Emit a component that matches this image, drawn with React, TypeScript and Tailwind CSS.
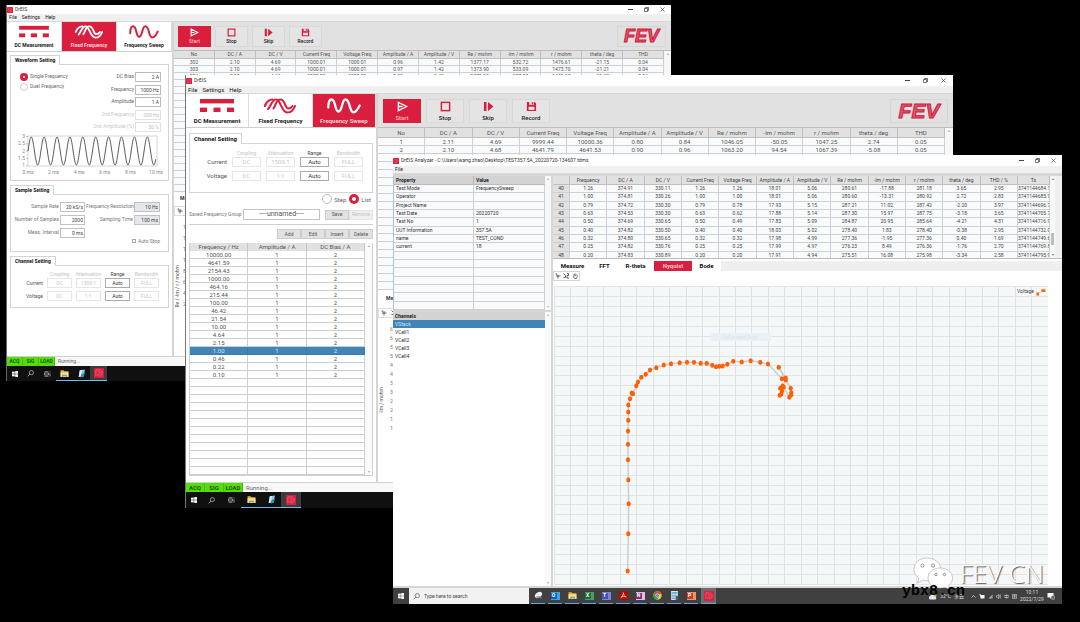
import React from "react";

type Size = "s" | "m";

const RED = "#d91f3d";

/* ---------- icons ---------- */

function AppIcon({ className }: { className: string }) {
  return (
    <svg viewBox="0 0 16 16" className={className} aria-hidden="true">
      <rect width="16" height="16" rx="1" fill={RED} />
      <path d="M3 13V3h5c4 0 5 2 5 5s-2 5-5 5M6 6h2c2 0 2 1 2 2s0 2-2 2H6v3" fill="none" stroke="#ea6a80" strokeWidth="1.2" />
    </svg>
  );
}

function DcIcon({ className }: { className: string }) {
  return (
    <svg viewBox="0 0 34 16" className={className} aria-hidden="true">
      <g fill="currentColor">
        <rect x="0" y="1" width="34" height="4.4" />
        <rect x="0" y="9.6" width="7" height="4.4" />
        <rect x="13.5" y="9.6" width="7" height="4.4" />
        <rect x="27" y="9.6" width="7" height="4.4" />
      </g>
    </svg>
  );
}

function FixedIcon({ className }: { className: string }) {
  return (
    <svg viewBox="0 0 34 16" className={className} aria-hidden="true">
      <g fill="none" stroke="currentColor" strokeWidth="2.1" strokeLinecap="round">
        <path d="M1.8 8C3.500 4 5.500 1.500 9.500 1.500" />
        <path d="M5 11C8 8 9 1.500 13 1.500C18 1.500 18 14.500 24.500 14.500C28 14.500 30.500 12 32 8" />
        <path d="M10.500 10.500C13 7 13 1.500 17.500 1.500C22.500 1.500 21.500 10.500 25.500 10.500C27.500 10.500 28.500 9.500 29.500 8" />
      </g>
    </svg>
  );
}

function SweepIcon({ className }: { className: string }) {
  return (
    <svg viewBox="0 0 34 16" className={className} aria-hidden="true">
      <path
        d="M1.300 9.500C1.300 4 2.500 1.500 4.500 1.500C9 1.500 7.500 13.500 11.500 13.500C15.500 13.500 14.500 1.500 18.500 1.500C23.500 1.500 22 14.300 26.500 14.300C29.500 14.300 31 11 32.700 7.500"
        fill="none"
        stroke="currentColor"
        strokeWidth="2.300"
        strokeLinecap="round"
      />
    </svg>
  );
}

function ToolIcon({ name, className }: { name: string; className: string }) {
  return (
    <svg viewBox="0 0 12 12" className={className} aria-hidden="true">
      {name === "Start" && <path d="M1.500 1.500L10.500 6L1.500 10.500Z M1.500 6H6" fill="none" stroke="currentColor" strokeWidth="1.500" />}
      {name === "Stop" && <rect x="1.500" y="1.500" width="9" height="9" fill="none" stroke="currentColor" strokeWidth="1.600" />}
      {name === "Skip" && <path d="M1 1H3.800V11H1Z M5.500 1L11.500 6L5.500 11Z" fill="currentColor" />}
      {name === "Record" && (
        <g>
          <path d="M1 1H9.500L11 2.500V11H1Z" fill="currentColor" />
          <rect x="3.500" y="1" width="5" height="3.200" fill="#e6e6e6" />
          <rect x="6.300" y="1.300" width="1.400" height="2.400" fill="currentColor" />
          <rect x="2.800" y="6.300" width="6.400" height="3.400" fill="#e6e6e6" />
        </g>
      )}
    </svg>
  );
}

function WindowsIcon() {
  return (
    <svg viewBox="0 0 12 12" className="size-[6px]" aria-hidden="true">
      <path d="M0 1.500L5.400 .8V5.600H0ZM6.200 .7L12 0V5.600H6.200ZM0 6.400H5.400V11.200L0 10.500ZM6.200 6.400H12V12L6.200 11.300Z" fill="#fff" />
    </svg>
  );
}

function SearchIcon({ className }: { className: string }) {
  return (
    <svg viewBox="0 0 12 12" className={className} aria-hidden="true">
      <circle cx="7.500" cy="4.500" r="3.500" fill="none" stroke="currentColor" strokeWidth="1.200" />
      <path d="M5 7L1 11" stroke="currentColor" strokeWidth="1.200" />
    </svg>
  );
}

function TaskViewIcon() {
  return (
    <svg viewBox="0 0 14 12" className="h-[6px] w-[7px]" aria-hidden="true">
      <path d="M1 1.500H9M1 10.500H9M1 4H9V8H1ZM12 1V3M12 4.500V11" fill="none" stroke="#ddd" strokeWidth="1.200" />
    </svg>
  );
}

function FolderIcon() {
  return (
    <svg viewBox="0 0 16 16" className="size-[9px]" aria-hidden="true">
      <path d="M1 2H6L8 4H15V14H1Z" fill="#e9b53a" />
      <path d="M1 6H15V14H1Z" fill="#ffdf7e" />
      <path d="M4 14V10H12V14H10V12H6V14Z" fill="#3f9bdc" />
    </svg>
  );
}

function NoteIcon() {
  return (
    <svg viewBox="0 0 16 16" className="size-[9px]" aria-hidden="true">
      <path d="M5 2L14 1L12 13L3 14Z" fill="#8fd0e6" />
      <path d="M5 2L9 1.600L7 13.500L3 14Z" fill="#d5eef6" />
      <path d="M8 9L14 6L12 14L6 15Z" fill="#3d8aa8" />
    </svg>
  );
}

function Tile({ letter, tile, page }: { letter: string; tile: string; page: string }) {
  return (
    <span className={`flex h-[8px] w-[9px] items-center justify-start ${page}`}>
      <span className={`flex h-[6px] w-[6px] items-center justify-center text-[5px] leading-none font-bold text-white ${tile}`}>{letter}</span>
    </span>
  );
}

function ChromeIcon() {
  return (
    <svg viewBox="0 0 16 16" className="size-[9px]" aria-hidden="true">
      <circle cx="8" cy="8" r="7.500" fill="#f6c026" />
      <path d="M8 8L1.500 4.200A7.500 7.500 0 0 1 14.500 4.300Z" fill="#dd4a3a" />
      <path d="M8 8L1.500 4.200A7.500 7.500 0 0 0 7.500 15.500L10 10Z" fill="#2da150" />
      <circle cx="8" cy="8" r="3.600" fill="#fff" />
      <circle cx="8" cy="8" r="2.800" fill="#4586f0" />
    </svg>
  );
}

function SnipIcon() {
  return (
    <svg viewBox="0 0 16 16" className="size-[9px]" aria-hidden="true">
      <ellipse cx="8" cy="7" rx="7" ry="4.500" fill="#f1eeee" transform="rotate(-35 8 7)" />
      <path d="M2 11L9 9L7 12Z" fill="#c9452f" />
      <path d="M8 10L14 13" stroke="#3793c4" strokeWidth="2" />
    </svg>
  );
}

function AcrobatIcon() {
  return (
    <svg viewBox="0 0 16 16" className="size-[9px]" aria-hidden="true">
      <rect width="16" height="16" rx="2" fill="#b30b00" />
      <path d="M8 3C7 8 5 11 3 12.500M8 3C8 7 10 10 13 10.500M4 11C7 9.500 10 9.500 13 10.500" fill="none" stroke="#fff" strokeWidth="1.200" />
    </svg>
  );
}

function CalcIcon() {
  return (
    <svg viewBox="0 0 16 16" className="size-[9px]" aria-hidden="true">
      <rect x="2" y="0" width="12" height="16" fill="#dfe7ec" />
      <rect x="3" y="2" width="10" height="3" fill="#4db2dc" />
      <path d="M3 7.500H13M3 10.500H9M3 13.500H9" stroke="#6f8796" strokeWidth="1.400" />
      <rect x="10" y="9" width="4" height="7" fill="#1f5fa0" />
    </svg>
  );
}

/* ---------- shared window parts ---------- */

function WindowControls({ className }: { className: string }) {
  return (
    <div className={`flex items-center ${className}`}>
      <button type="button" aria-label="Minimize" className="flex size-[5px] items-center">
        <span className="h-px w-full bg-[#444]" />
      </button>
      <button type="button" aria-label="Restore" className="size-[5px]">
        <svg viewBox="0 0 10 10" className="size-full">
          <path d="M1 3H7V9H1ZM3 3V1H9V7H7" fill="none" stroke="#333" strokeWidth="1.400" />
        </svg>
      </button>
      <button type="button" aria-label="Close" className="size-[5px]">
        <svg viewBox="0 0 10 10" className="size-full">
          <path d="M1 1L9 9M9 1L1 9" stroke="#333" strokeWidth="1.300" />
        </svg>
      </button>
    </div>
  );
}

const titleBar = { s: "h-[9px]", m: "h-[11px]" };
const menuBar = { s: "h-[8px] text-[5px]", m: "h-[8px] text-[6px]" };

function TitleBar({ size, title, controls }: { size: Size; title: string; controls: string }) {
  return (
    <header className={`flex items-center justify-between bg-white ${titleBar[size]}`}>
      <div className="flex items-center gap-[2px] text-[5px] leading-[7px] text-[#333]">
        <AppIcon className="size-[6px]" />
        <h2>{title}</h2>
      </div>
      <WindowControls className={controls} />
    </header>
  );
}

function MenuBar({ size, items }: { size: Size; items: string[] }) {
  return (
    <nav className={`flex items-center gap-[5px] border-b border-[#d9d9d9] bg-[#f0f0f0] pl-[2px] text-[#222] ${menuBar[size]}`}>
      {items.map((item) => (
        <button type="button" key={item} className="leading-none">
          {item}
        </button>
      ))}
    </nav>
  );
}

const modes = [
  { name: "DC Measurement", Icon: DcIcon },
  { name: "Fixed Frequency", Icon: FixedIcon },
  { name: "Frequency Sweep", Icon: SweepIcon },
];

function ModeTabs({ size, active }: { size: Size; active: string }) {
  return (
    <div role="tablist" className={`flex border-b border-[#cfcfcf] bg-white ${size === "s" ? "h-[30px]" : "h-[34px]"}`}>
      {modes.map(({ name, Icon }) => {
        const on = name === active;
        return (
          <button
            type="button"
            role="tab"
            aria-selected={on}
            key={name}
            className={`flex flex-1 flex-col items-center border-r border-[#dcdcdc] ${
              size === "s" ? "gap-[2px] pt-[3px] text-[5px]" : "gap-[3px] pt-[4px] text-[6px]"
            } ${on ? "bg-[#d91f3d] text-white" : "bg-white text-[#d91f3d]"}`}
          >
            <Icon className={size === "s" ? "h-[14px] w-[30px]" : "h-[16px] w-[34px]"} />
            <span className={`leading-[8px] font-bold whitespace-nowrap ${on ? "text-[#ffd0d8]" : "text-[#222]"}`}>{name}</span>
          </button>
        );
      })}
    </div>
  );
}

function ToolBar({ size }: { size: Size }) {
  const small = size === "s";
  return (
    <div className={`flex items-center justify-between border-b border-[#bdbdbd] bg-[#e1e1e1] ${small ? "h-[29px] pr-[5px] pl-[4px]" : "h-[34px] pr-[5px] pl-[5px]"}`}>
      <div className={`flex ${small ? "gap-[4px]" : "gap-[5px]"}`}>
        {["Start", "Stop", "Skip", "Record"].map((name) => (
          <button
            type="button"
            key={name}
            className={`flex flex-col items-center justify-center border ${
              small ? "h-[21px] w-[33px] gap-[1px] text-[5px]" : "h-[24px] w-[38px] gap-[2px] text-[6px]"
            } ${name === "Start" ? "border-[#d91f3d] bg-[#d91f3d] text-white" : "border-[#d8d8d8] bg-[#e4e4e4] text-[#d91f3d]"}`}
          >
            <ToolIcon name={name} className={small ? "size-[9px]" : "size-[11px]"} />
            <span className={`leading-[7px] font-medium ${name === "Start" ? "text-[#ffb9c5]" : "text-[#222]"}`}>{name}</span>
          </button>
        ))}
      </div>
      <div className={`flex items-center justify-center border border-[#d6d6d6] ${small ? "h-[21px] w-[49px]" : "h-[24px] w-[58px]"}`}>
        <span
          className={`font-['Liberation_Sans',sans-serif] leading-none font-bold text-[#e0546b] italic [-webkit-text-stroke:1px_#d3163a] ${
            small ? "text-[18px]" : "text-[21px]"
          }`}
        >
          FEV
        </span>
      </div>
    </div>
  );
}

const liveHeads = [
  "No", "DC / A", "DC / V", "Current Freq", "Voltage Freq", "Amplitude / A", "Amplitude / V",
  "Re / mohm", "-Im / mohm", "r / mohm", "theta / deg", "THD",
];

function LiveTable({ size, rows, blanks }: { size: Size; rows: string[][]; blanks: number }) {
  const small = size === "s";
  const cell = `border-r border-b border-[#cdd1d4] p-0 text-center whitespace-nowrap ${small ? "h-[7px] leading-[6px]" : "h-[8px] leading-[7px]"}`;
  return (
    <div className="flex">
      <div className="min-w-0 flex-1">
        <table className={`w-full table-fixed border-separate border-spacing-0 bg-[#f8fafb] text-[#555] ${small ? "text-[5px]" : "text-[6px]"}`}>
          <thead>
            <tr>
              {liveHeads.map((h) => (
                <th key={h} className={`border-r border-b border-[#bfbfbf] bg-[#e1e1e1] p-0 font-normal whitespace-nowrap ${small ? "h-[8px] leading-[7px]" : "h-[10px] leading-[9px]"}`}>
                  {h}
                </th>
              ))}
            </tr>
          </thead>
          <tbody>
            {rows.map((row) => (
              <tr key={row[0]}>
                {row.map((v, i) => (
                  <td key={i} className={cell}>{v}</td>
                ))}
              </tr>
            ))}
            {Array.from({ length: blanks }, (_, r) => (
              <tr key={`b${r}`}>
                {liveHeads.map((h) => (
                  <td key={h} className={cell} />
                ))}
              </tr>
            ))}
          </tbody>
        </table>
      </div>
      <div className={`bg-[#f7f7f7] text-center text-[4px] text-[#aaa] ${small ? "w-[7px]" : "w-[8px]"}`}>▴</div>
    </div>
  );
}

function Group({ size, title, children }: { size: Size; title: string; children: React.ReactNode }) {
  return (
    <section>
      <h3
        className={`relative -mb-px w-fit border border-b-0 border-[#d4d4d4] bg-white font-bold text-[#111] ${
          size === "s" ? "h-[10px] px-[4px] text-[5px] leading-[9px]" : "h-[11px] px-[4px] text-[6px] leading-[10px]"
        }`}
      >
        {title}
      </h3>
      <div className="border border-[#d4d4d4]">{children}</div>
    </section>
  );
}

function ChannelSettings({ size }: { size: Size }) {
  const small = size === "s";
  const columns = ["Coupling", "Attenuation", "Range", "Bandwidth"];
  const rows = [
    { name: "Current", values: ["DC", "1500:1", "Auto", "FULL"] },
    { name: "Voltage", values: ["DC", "1:1", "Auto", "FULL"] },
  ];
  return (
    <div
      className={`grid items-center text-center ${
        small
          ? "h-[41px] grid-cols-[32px_25px_25px_25px_25px] content-start gap-x-[4px] pt-[5px] text-[5px]"
          : "h-[48px] grid-cols-[37px_29px_29px_29px_29px] content-start gap-x-[5px] pt-[6px] text-[6px]"
      }`}
    >
      <span />
      {columns.map((c) => (
        <span key={c} className={`flex justify-center text-[5px] leading-[7px] whitespace-nowrap ${c === "Range" ? "text-[#444]" : "text-[#c4c4c4]"}`}>{c}</span>
      ))}
      {rows.map((row) => (
        <React.Fragment key={row.name}>
          <span className={`text-right leading-[10px] text-[#555] ${small ? "pb-[3px]" : "pb-[4px]"}`}>{row.name}</span>
          {row.values.map((v, i) => (
            <select
              key={columns[i]}
              aria-label={`${row.name} ${columns[i]}`}
              disabled={v !== "Auto"}
              className={`h-[10px] w-full appearance-none border bg-white p-0 text-center leading-none disabled:opacity-100 ${
                small ? "mb-[3px]" : "mb-[4px]"
              } ${v === "Auto" ? "border-[#ababab] text-[#333]" : "border-[#e6e6e6] text-[#c8c8c8]"}`}
            >
              <option>{v}</option>
            </select>
          ))}
        </React.Fragment>
      ))}
    </div>
  );
}

function StatusBar({ size }: { size: Size }) {
  return (
    <footer className={`flex h-[10px] items-center border-t border-[#d0d0d0] bg-[#f8f8f8] ${size === "s" ? "text-[5px]" : "text-[6px]"}`}>
      {["ACQ", "SIG", "LOAD"].map((s) => (
        <span key={s} className={`flex h-full items-center justify-center border-r border-[#49c010] bg-[#55dc0a] font-bold text-[#1c5a00] ${size === "s" ? "w-[16px]" : "w-[19px]"}`}>
          {s}
        </span>
      ))}
      <span className="pl-[3px] text-[#666]">Running...</span>
    </footer>
  );
}

function SmallTaskbar({ size }: { size: Size }) {
  const w = size === "s" ? "w-[17px]" : "w-[20px]";
  const item = `flex h-full items-center justify-center ${w}`;
  return (
    <div className={`flex bg-[#101010] ${size === "s" ? "h-[15px]" : "h-[16px]"}`}>
      <button type="button" aria-label="Windows menu" className="flex h-full w-[15px] items-center justify-center"><WindowsIcon /></button>
      <button type="button" aria-label="Search" className={`${item} text-[#ccc]`}><SearchIcon className="size-[7px]" /></button>
      <button type="button" aria-label="Task view" className={item}><TaskViewIcon /></button>
      <button type="button" aria-label="File Explorer" className={`${item} border-b border-[#76b9ed]`}><FolderIcon /></button>
      <button type="button" aria-label="Notes" className={`${item} border-b border-[#76b9ed]`}><NoteIcon /></button>
      <button type="button" aria-label="DrEIS" className={`${item} border-b border-[#76b9ed] bg-[#3c3c3c]`}><AppIcon className="size-[10px]" /></button>
    </div>
  );
}

function SideChart({ size, label, ticks }: { size: Size; label: string; ticks: string[] }) {
  const small = size === "s";
  return (
    <div className="flex flex-1 flex-col bg-white text-[5px] text-[#333]">
      <div className={`flex items-center font-bold ${small ? "h-[14px] pl-[6px]" : "h-[18px] pl-[8px]"}`}>Measure</div>
      <div className="flex h-[10px] items-center gap-[4px] border border-[#ddd] pl-[2px]">
        <svg viewBox="0 0 12 12" className="size-[6px]" aria-hidden="true"><path d="M6 2V11M2 6H11" stroke="#333" strokeWidth="1.500" /><path d="M0 2L4 0V5Z" fill="#55b430" /></svg>
        <svg viewBox="0 0 12 12" className="size-[6px]" aria-hidden="true"><path d="M1 1L5 5M1 9H5V5M8 1H11V5H8V10H12" fill="none" stroke="#333" strokeWidth="1.500" /></svg>
      </div>
      <div className={`flex flex-1 items-center ${small ? "gap-[2px]" : "gap-[5px]"}`}>
        <span className="rotate-180 leading-[7px] text-[#555] [writing-mode:vertical-rl]">{label}</span>
        <div className={`flex h-full flex-col pt-[8px] text-[#777] ${small ? "gap-[5px]" : "gap-[3px]"}`}>
          {ticks.map((t) => (
            <span key={t} className="leading-[6px]">{t}</span>
          ))}
        </div>
      </div>
    </div>
  );
}

/* ---------- window 1: fixed frequency ---------- */

const fixedRows = [
  ["302", "2.10", "4.69", "1000.01", "1000.01", "0.96", "1.42", "1377.17", "532.72", "1476.61", "-21.15", "0.04"],
  ["303", "2.10", "4.69", "1000.01", "1000.01", "0.97", "1.42", "1373.90", "533.09", "1473.70", "-21.21", "0.04"],
  ["304", "2.10", "4.69", "1000.01", "1000.01", "0.95", "1.42", "1379.95", "537.38", "1480.27", "-21.23", "0.04"],
];

const waveFields = [
  { label: "DC Bias", value: "2 A", off: false },
  { label: "Frequency", value: "1000 Hz", off: false },
  { label: "Amplitude", value: "1 A", off: false },
  { label: "2nd Frequency", value: "200 Hz", off: true },
  { label: "2nd Amplitude (%)", value: "50 %", off: true },
];

function wavePath() {
  const pts: string[] = [];
  for (let i = 0; i <= 396; i++) {
    const x = 17 + (i / 400) * 129;
    const y = 19 - Math.sin((i / 40) * 2 * Math.PI) * 14;
    pts.push(`${x.toFixed(2)},${y.toFixed(2)}`);
  }
  return "M" + pts.join("L");
}

function WaveChart() {
  return (
    <svg viewBox="0 0 157 44" className="block h-[44px] w-[157px]" role="img" aria-label="Waveform preview">
      <path d="M17 4H146V34H17Z" fill="none" stroke="#d5d5d5" strokeWidth="1" />
      <path d={wavePath()} fill="none" stroke="#444" strokeWidth="0.9" />
      <g fontSize="5" fill="#888" textAnchor="end">
        {["3", "2.5", "2", "1.5", "1"].map((t, i) => (
          <text key={t} x="14" y={6 + i * 7.3}>{t}</text>
        ))}
      </g>
      <g stroke="#999" strokeWidth="0.6">
        {[0, 1, 2, 3, 4].map((i) => (
          <path key={i} d={`M15 ${4.5 + i * 7.3}H17`} />
        ))}
      </g>
      <g fontSize="5" fill="#888" textAnchor="middle">
        {["0 ms", "2 ms", "4 ms", "6 ms", "8 ms", "10 ms"].map((t, i) => (
          <text key={t} x={17 + i * 25.6} y="42">{t}</text>
        ))}
      </g>
    </svg>
  );
}

function SampleField({ id, label, value, filled }: { id: string; label: string; value: string; filled?: boolean }) {
  return (
    <>
      <label htmlFor={id} className="text-right whitespace-nowrap text-[#777]">{label}</label>
      <input
        id={id}
        defaultValue={value}
        readOnly={filled}
        className={`h-[10px] w-full min-w-0 border border-[#c2c2c2] px-[1px] text-right leading-none text-[#444] ${filled ? "bg-[#e4e8ec]" : "bg-white"}`}
      />
    </>
  );
}

function FixedFrequencyWindow() {
  return (
    <article aria-label="DrEIS fixed frequency" className="absolute top-[5px] right-[409px] left-[6px] border-l border-[#666] bg-white">
      <TitleBar size="s" title="DrEIS" controls="gap-[11px] pr-[6px]" />
      <MenuBar size="s" items={["File", "Settings", "Help"]} />
      <div className="flex h-[334px]">
        <div className="w-[167px] shrink-0 border-r-2 border-[#d5d5d5]">
          <ModeTabs size="s" active="Fixed Frequency" />
          <div className="flex flex-col gap-[4px] px-[3px] pt-[3px]">
            <Group size="s" title="Waveform Setting">
              <div className="h-[115px] pt-[7px]">
                <div className="flex h-[60px] justify-between pr-[7px] pl-[9px]">
                  <div className="flex flex-col gap-px text-[5px] text-[#666]">
                    <label className="flex h-[9px] items-center gap-[2px]">
                      <input type="radio" name="count" defaultChecked className="size-[8px] appearance-none rounded-full border-[3px] border-[#d91f3d] bg-white" />
                      Single Frequency
                    </label>
                    <label className="flex h-[9px] items-center gap-[2px]">
                      <input type="radio" name="count" className="size-[8px] appearance-none rounded-full border border-[#ccc] bg-white" />
                      Duel Frequency
                    </label>
                  </div>
                  <div className="flex flex-col justify-between text-[5px]">
                    {waveFields.map((f) => (
                      <div key={f.label} className="flex items-center justify-end gap-[1px]">
                        <label htmlFor={`wave-${f.label}`} className={f.off ? "text-[#c8c8c8]" : "text-[#666]"}>{f.label}</label>
                        <input
                          id={`wave-${f.label}`}
                          defaultValue={f.value}
                          disabled={f.off}
                          className={`h-[10px] w-[26px] border bg-white px-[1px] text-right leading-none ${
                            f.off ? "border-[#e2e2e2] text-[#c0c0c0]" : "border-[#bbb] text-[#444]"
                          }`}
                        />
                      </div>
                    ))}
                  </div>
                </div>
                <WaveChart />
              </div>
            </Group>
            <Group size="s" title="Sample Setting">
              <div className="h-[56px] pt-[7px]">
                <div className="grid grid-cols-[48px_25px_47px_26px] items-center gap-x-[1px] gap-y-[3px] text-[5px]">
                  <SampleField id="rate" label="Sample Rate" value="20 kS/s" />
                  <SampleField id="resolution" label="Frequency Resolution" value="10 Hz" filled />
                  <SampleField id="samples" label="Number of Samples" value="2000" />
                  <SampleField id="time" label="Sampling Time" value="100 ms" filled />
                  <SampleField id="interval" label="Meas. Interval" value="0 ms" />
                </div>
                <label className="flex items-center justify-end gap-[2px] pr-[8px] text-[5px] leading-[6px] text-[#777]">
                  <input type="checkbox" className="size-[4px] appearance-none border border-[#aaa]" />
                  Auto Stop
                </label>
              </div>
            </Group>
            <Group size="s" title="Channel Setting">
              <ChannelSettings size="s" />
            </Group>
          </div>
        </div>
        <div className="flex min-w-0 flex-1 flex-col">
          <ToolBar size="s" />
          <LiveTable size="s" rows={fixedRows} blanks={16} />
          <SideChart size="s" label="Re / -Im / r / mohm" ticks={["16", "14", "12", "10", "8", "6", "4", "2"]} />
        </div>
      </div>
      <StatusBar size="s" />
      <SmallTaskbar size="s" />
    </article>
  );
}

/* ---------- window 2: frequency sweep ---------- */

const sweepRows = [
  ["1", "2.11", "4.69", "9999.44", "10000.36", "0.80", "0.84", "1046.05", "-50.05", "1047.25", "2.74", "0.05"],
  ["2", "2.10", "4.68", "4641.79", "4641.53", "0.90", "0.96", "1063.20", "94.54", "1067.39", "-5.08", "0.05"],
  ["3", "2.10", "4.68", "2154.43", "2154.40", "0.90", "1.03", "1098.95", "206.15", "1120.60", "-11.02", "0.04"],
];

const frequencies = [
  "10000.00", "4641.59", "2154.43", "1000.00", "464.16", "215.44", "100.00", "46.42",
  "21.54", "10.00", "4.64", "2.15", "1.00", "0.46", "0.22", "0.10",
];

function FrequencyTable() {
  const rows = [...frequencies, ...Array.from({ length: 12 }, () => "")];
  return (
    <div className="flex border-x border-b border-[#cfcfcf]">
      <div className="min-w-0 flex-1">
        <table className="w-full table-fixed border-separate border-spacing-0 text-[6px] text-[#555]">
          <thead>
            <tr>
              {["Frequency / Hz", "Amplitude / A", "DC Bias / A"].map((h) => (
                <th key={h} className="h-[8px] border-r border-[#c4c4c4] bg-[#e1e1e1] p-0 leading-[8px] font-normal">{h}</th>
              ))}
            </tr>
          </thead>
          <tbody>
            {rows.map((f, i) => {
              const cell = `h-[8px] border-r border-b p-0 text-center leading-[7px] ${
                f === "1.00" ? "border-[#3a7aae] bg-[#4084b8] text-[#cfe2f1]" : "border-[#cdcdcd]"
              }`;
              return (
                <tr key={i}>
                  <td className={cell}>{f}</td>
                  <td className={cell}>{f && "1"}</td>
                  <td className={cell}>{f && "2"}</td>
                </tr>
              );
            })}
          </tbody>
        </table>
      </div>
      <div className="flex w-[7px] flex-col justify-between bg-[#fafafa] text-center text-[4px] text-[#aaa]">
        <span>▴</span>
        <span>▾</span>
      </div>
    </div>
  );
}

function FrequencySweepWindow() {
  const grayButton = "h-[10px] w-[24px] border border-[#cdcdcd] bg-[#e1e1e1] leading-none text-[#555]";
  return (
    <article aria-label="DrEIS frequency sweep" className="absolute top-[75px] right-[127px] left-[185px] border-l border-[#777] bg-white">
      <TitleBar size="m" title="DrEIS" controls="gap-[13px] pr-[7px]" />
      <MenuBar size="m" items={["File", "Settings", "Help"]} />
      <div className="flex h-[388px]">
        <div className="w-[192px] shrink-0 border-r-2 border-[#d5d5d5]">
          <ModeTabs size="m" active="Frequency Sweep" />
          <div className="px-[3px] pt-[5px]">
            <Group size="m" title="Channel Setting">
              <ChannelSettings size="m" />
            </Group>
            <div className="flex h-[12px] items-center justify-end gap-[3px] text-[6px] text-[#666]">
              <label className="flex items-center gap-[2px]">
                <input type="radio" name="entry" className="size-[10px] appearance-none rounded-full border border-[#bbb] bg-white" />
                Step
              </label>
              <label className="flex items-center gap-[2px] pr-[2px]">
                <input type="radio" name="entry" defaultChecked className="size-[10px] appearance-none rounded-full border-[3px] border-[#d91f3d] bg-white" />
                List
              </label>
            </div>
            <div className="mt-[4px] flex items-center border-b border-[#cfcfcf] pb-[4px] text-[5px]">
              <label htmlFor="group" className="w-[54px] whitespace-nowrap text-[#777]">Saved Frequency Group</label>
              <select id="group" className="mr-[5px] h-[11px] min-w-0 flex-1 appearance-none border border-[#c4c4c4] bg-white p-0 text-center text-[7px] leading-none text-[#555]">
                <option>----unnamed----</option>
              </select>
              <button type="button" className={grayButton}>Save</button>
              <button type="button" disabled className="h-[10px] w-[24px] border border-[#e4e4e4] bg-[#efefef] leading-none text-[#c4c4c4]">Remove</button>
            </div>
            <div className="flex justify-end py-[4px] text-[5px]">
              {["Add", "Edit", "Insert", "Delete"].map((b) => (
                <button type="button" key={b} className={grayButton}>{b}</button>
              ))}
            </div>
            <FrequencyTable />
          </div>
        </div>
        <div className="flex min-w-0 flex-1 flex-col">
          <ToolBar size="m" />
          <LiveTable size="m" rows={sweepRows} blanks={16} />
          <SideChart size="m" label="-Im / mohm" ticks={["650", "600", "550", "500", "450", "400", "350", "300", "250", "200", "150", "100"]} />
        </div>
      </div>
      <StatusBar size="m" />
      <SmallTaskbar size="m" />
    </article>
  );
}

/* ---------- window 3: analyzer ---------- */

const properties = [
  ["Test Mode", "FrequencySweep"],
  ["Operator", ""],
  ["Project Name", ""],
  ["Test Date", "20220720"],
  ["Test No", "1"],
  ["UUT Information", "357.5A"],
  ["name", "TEST_COND"],
  ["current", "18"],
  ...Array.from({ length: 7 }, () => ["", ""]),
];

const analyzerHeads = [
  "Frequency", "DC / A", "DC / V", "Current Freq", "Voltage Freq", "Amplitude / A", "Amplitude / V",
  "Re / mohm", "-Im / mohm", "r / mohm", "theta / deg", "THD / %", "Ts",
];

const analyzerRows = [
  ["40", "1.26", "374.91", "330.11", "1.26", "1.26", "18.01", "5.06", "280.61", "-17.88", "281.18", "3.65", "2.95", "3741144684.1"],
  ["41", "1.00", "374.81", "330.26", "1.00", "1.00", "18.01", "5.06", "280.60", "-13.31", "280.92", "2.72", "2.83", "3741144685.9"],
  ["42", "0.79", "374.72", "330.30", "0.79", "0.78", "17.93", "5.15", "287.21", "11.02", "287.42", "-2.20", "3.97", "3741144696.7"],
  ["43", "0.63", "374.53", "330.30", "0.63", "0.62", "17.88", "5.14", "287.30", "15.97", "287.75", "-3.18", "3.65", "3741144705.7"],
  ["44", "0.50", "374.69", "330.65", "0.50", "0.49", "17.83", "5.09", "284.87", "20.95", "285.64", "-4.21", "4.31", "3741144716.9"],
  ["45", "0.40", "374.82", "330.50", "0.40", "0.40", "18.03", "5.02", "278.40", "1.83", "278.40", "-0.38", "2.95", "3741144732.0"],
  ["46", "0.32", "374.80", "330.65", "0.32", "0.32", "17.98", "4.99", "277.36", "-1.95", "277.36", "0.40", "1.69", "3741144749.6"],
  ["47", "0.25", "374.82", "330.76", "0.25", "0.25", "17.99", "4.97", "276.23", "8.49", "276.36", "-1.76", "2.70", "3741144769.8"],
  ["48", "0.20", "374.83", "330.89", "0.20", "0.20", "17.91", "4.94", "275.51", "16.08", "275.98", "-3.34", "2.58", "3741144795.9"],
];

const nyquist: [number, number][] = [
  [73.7, 285], [74.3, 247.7], [74.7, 217.7], [74.3, 193.7], [74, 173.7], [74, 158.3], [74, 145], [74.3, 134.3],
  [74.3, 126], [74.3, 119], [76, 112.7], [77.7, 107], [79, 107.7], [82.3, 99.7], [84, 96], [87.3, 91.3],
  [91.7, 88.3], [96, 84], [102.3, 81.7], [109.7, 79], [117, 77.7], [125.7, 76.7], [133, 76.3], [140, 76.3],
  [146.7, 77.3], [152.7, 77.3], [158.3, 79.3], [162, 80.7], [165.3, 80.3], [168.7, 80], [173.3, 78.3],
  [179.3, 75.3], [187.7, 76], [196.7, 74.7], [206.3, 76.3], [214, 78], [228, 92.7], [231.7, 92], [224.7, 81.3],
  [231.7, 94], [236.7, 102.3], [237.3, 106.7], [237.3, 108.7], [235.3, 111.3], [228.7, 99.7], [226.3, 102.3],
  [229.7, 101.3], [228, 105.3], [227.3, 108], [225.7, 109.3],
];

function NyquistPlot() {
  return (
    <div className="relative">
      <svg viewBox="0 0 494 299" preserveAspectRatio="xMinYMin slice" className="block h-[299px] w-full" role="img" aria-label="Nyquist plot">
        <rect width="494" height="299" fill="#f5f8f9" />
        <g stroke="#e0e2e3" strokeWidth="1">
          {Array.from({ length: 31 }, (_, i) => (
            <path key={`v${i}`} d={`M${Math.round(i * 16.45) + 0.5} 0V299`} />
          ))}
          {Array.from({ length: 31 }, (_, i) => (
            <path key={`h${i}`} d={`M0 ${Math.round(i * 9.93) + 0.5}H494`} />
          ))}
        </g>
        <rect x="157" y="47" width="60" height="8" fill="#e9f0f7" />
        <text x="168" y="53" fontSize="5" fill="#dbe3ea">Full-screen Snip</text>
        <polyline points={nyquist.map((p) => p.join(",")).join(" ")} fill="none" stroke="#cdcdcd" strokeWidth="1.5" />
        <g fill="#ff6000">
          {nyquist.map(([x, y], i) => (
            <ellipse key={i} cx={x} cy={y} rx="2.1" ry="2.5" />
          ))}
        </g>
      </svg>
      <div className="absolute top-[2px] right-[2px] flex items-center gap-[2px] text-[5px] text-[#444]">
        Voltage
        <svg viewBox="0 0 10 8" className="h-[8px] w-[10px]" aria-hidden="true">
          <rect width="10" height="8" fill="#fff" stroke="#ccc" strokeWidth=".5" />
          <path d="M1.500 6L7.500 2.500" stroke="#ccc" />
          <path d="M0.500 4.500H3V7.500H.5ZM5.500 1.300H9.300V4H5.500Z" fill="#ff6000" />
        </svg>
      </div>
    </div>
  );
}

function AnalyzerTaskbar() {
  const apps: { name: string; icon: React.ReactNode }[] = [
    { name: "Snip & Sketch", icon: <SnipIcon /> },
    { name: "Outlook", icon: <Tile letter="O" tile="bg-[#0a64b8]" page="bg-[#3ea3e6]" /> },
    { name: "File Explorer", icon: <FolderIcon /> },
    { name: "Excel", icon: <Tile letter="X" tile="bg-[#14703c]" page="bg-[#4d9a6a]" /> },
    { name: "Teams", icon: <Tile letter="T" tile="bg-[#4750b5]" page="bg-[#7a82dc]" /> },
    { name: "Acrobat", icon: <AcrobatIcon /> },
    { name: "OneNote", icon: <Tile letter="N" tile="bg-[#80307a]" page="bg-[#dcc0dc]" /> },
    { name: "Chrome", icon: <ChromeIcon /> },
    { name: "Calculator", icon: <CalcIcon /> },
    { name: "PowerPoint", icon: <Tile letter="P" tile="bg-[#cb4021]" page="bg-[#ee9070]" /> },
  ];
  return (
    <div className="flex h-[16px] items-center bg-[#404040] text-white">
      <button type="button" aria-label="Windows menu" className="flex w-[16px] items-center justify-center"><WindowsIcon /></button>
      <label className="flex h-full w-[120px] items-center gap-[4px] bg-[#f2f2f2] pl-[4px] text-[#555]">
        <SearchIcon className="size-[7px]" />
        <input aria-label="Search" placeholder="Type here to search" className="min-w-0 flex-1 bg-transparent text-[5px] leading-none placeholder:text-[#444]" />
      </label>
      <div className="flex h-full gap-[3px] pl-[2px]">
        {apps.map((a) => (
          <button type="button" key={a.name} aria-label={a.name} className="flex h-full w-[14px] items-center justify-center border-b border-[#6fa3c8]">
            {a.icon}
          </button>
        ))}
        <button type="button" aria-label="DrEIS" className="flex h-full w-[15px] items-center justify-center border-b border-[#6fa3c8] bg-[#6d6d6d]">
          <AppIcon className="size-[10px]" />
        </button>
      </div>
      <div className="ml-auto flex items-center gap-[3px] pr-[7px] font-[Roboto,'Noto_Sans_CJK_SC',sans-serif] text-[5px] leading-[7px] text-[#ddd]">
        <svg viewBox="0 0 16 14" className="h-[7px] w-[8px]" aria-hidden="true">
          <circle cx="11" cy="5" r="4" fill="#f5a623" />
          <path d="M2 13a4 4 0 0 1 0-7a5 5 0 0 1 9 1a3 3 0 0 1 1 6Z" fill="#dfe8f2" />
        </svg>
        <span>32°C</span>
        <span className="mr-[4px]">多云</span>
        <svg viewBox="0 0 10 6" className="h-[3px] w-[5px]" aria-hidden="true"><path d="M1 5L5 1L9 5" fill="none" stroke="#ddd" strokeWidth="1.500" /></svg>
        <svg viewBox="0 0 12 10" className="h-[5px] w-[6px]" aria-hidden="true"><path d="M1 1V0H3V2H11V9H3V6Z" fill="#fff" /></svg>
        <svg viewBox="0 0 12 12" className="size-[5px]" aria-hidden="true"><path d="M11 1V11H1Z" fill="#aaa" /></svg>
        <svg viewBox="0 0 12 12" className="size-[5px]" aria-hidden="true"><path d="M1 4H3L6 1V11L3 8H1ZM8 3Q10 6 8 9M10 1Q13 6 10 11" fill="none" stroke="#ddd" strokeWidth="1.300" /></svg>
        <span>中</span>
        <svg viewBox="0 0 12 12" className="size-[5px]" aria-hidden="true"><path d="M1 1H11V11H1ZM3 4H9M3 7H9M6 3V9" fill="none" stroke="#ddd" strokeWidth="1.400" /></svg>
        <span className="flex w-[24px] flex-col items-center">
          <time>10:11</time>
          <time>2022/7/29</time>
        </span>
        <svg viewBox="0 0 16 16" className="size-[8px]" aria-hidden="true">
          <path d="M1 2H13V11H9L7 14V11H1Z" fill="#fff" />
          <circle cx="12" cy="11" r="4" fill="#666" stroke="#ccc" />
        </svg>
      </div>
    </div>
  );
}

function AnalyzerWindow() {
  const propCell = "h-[8px] border-r border-b border-[#cdd1d4] py-0 pr-0 pl-[2px] text-left leading-[7px]";
  const cell = "h-[8px] border-r border-b border-[#cdd1d4] p-0 text-center leading-[7px] whitespace-nowrap overflow-hidden";
  return (
    <article aria-label="DrEIS Analyzer" className="absolute top-[155px] right-[18px] left-[393px] bg-[#d6d6d6]">
      <TitleBar size="m" title="DrEIS Analyzer - C:\Users\wang.zhao\Desktop\TEST357.5A_20220720-134607.tdms" controls="gap-[11px] pr-[6px]" />
      <MenuBar size="s" items={["File"]} />
      <div className="flex gap-[2px] pt-[2px] pb-[2px]">
        <div className="flex w-[158px] shrink-0 flex-col gap-[2px]">
          <div className="flex">
            <table className="h-[134px] w-[152px] table-fixed border-separate border-spacing-0 border-l border-[#a8c4e4] bg-[#f8fafb] text-[5px] text-[#333]">
              <thead>
                <tr>
                  <th className="h-[9px] w-[80px] border-r border-b border-[#bbb] bg-[#d3d3d3] py-0 pl-[2px] text-left leading-[8px] font-bold text-[#222]">Property</th>
                  <th className="h-[9px] border-b border-[#bbb] bg-[#d3d3d3] py-0 pl-[2px] text-left leading-[8px] font-bold text-[#222]">Value</th>
                </tr>
              </thead>
              <tbody>
                {properties.map(([k, v], i) => (
                  <tr key={i}>
                    <td className={propCell}>{k}</td>
                    <td className={propCell}>{v}</td>
                  </tr>
                ))}
              </tbody>
            </table>
            <div className="flex w-[6px] flex-col justify-between bg-[#f7f7f7] text-center text-[4px] text-[#bbb]">
              <span>▴</span>
              <span>▾</span>
            </div>
          </div>
          <div className="flex h-[274px]">
            <div className="min-w-0 flex-1 bg-white text-[5px] text-[#333]">
              <h3 className="h-[8px] bg-[#d3d3d3] pl-[2px] leading-[8px] font-bold text-[#222]">Channels</h3>
              <ul>
                {["VStack", "VCell1", "VCell2", "VCell3", "VCell4"].map((c) => (
                  <li key={c} className={c === "VStack" ? "h-[8px] bg-[#4084b8] pl-[2px] leading-[8px] text-[#d4e6f4]" : "h-[8px] pl-[2px] leading-[8px]"}>{c}</li>
                ))}
              </ul>
            </div>
            <div className="flex w-[6px] flex-col justify-between bg-[#f9f9f9] text-center text-[4px] text-[#bbb]">
              <span>▴</span>
              <span>▾</span>
            </div>
          </div>
        </div>
        <div className="min-w-0 flex-1 bg-white">
          <div className="flex h-[83px] overflow-hidden border-b border-[#bbb] bg-[#f0f0f0] pr-[7px]">
            <div className="min-w-0 flex-1">
              <table className="h-[84px] w-full table-fixed border-separate border-spacing-0 bg-[#f8fafb] text-[5px] text-[#444]">
                <thead>
                  <tr>
                    <th aria-label="Row" className="h-[9px] w-[17px] border-r border-b border-[#bfbfbf] bg-[#e1e1e1] p-0" />
                    {analyzerHeads.map((h) => (
                      <th key={h} className={`h-[9px] border-r border-b border-[#bfbfbf] bg-[#e1e1e1] p-0 leading-[8px] font-normal whitespace-nowrap ${h === "Ts" ? "w-[32px]" : ""}`}>{h}</th>
                    ))}
                  </tr>
                </thead>
                <tbody>
                  {analyzerRows.map((row) => (
                    <tr key={row[0]}>
                      {row.map((v, i) => (
                        <td key={i} className={i === 0 ? `${cell} bg-[#e1e1e1]` : cell}>{v}</td>
                      ))}
                    </tr>
                  ))}
                </tbody>
              </table>
            </div>
            <div className="flex w-[5px] flex-col items-center justify-between bg-[#f7f7f7] text-[4px] text-[#777]">
              <span>▴</span>
              <span className="mt-[44px] h-[12px] w-[3px] bg-[#bdbdbd]" />
              <span>▾</span>
            </div>
          </div>
          <div role="tablist" className="mt-[2px] flex h-[10px] bg-[#efefef] text-[6px] leading-none font-bold text-[#111]">
            <button type="button" role="tab" className="w-[39px] bg-white">Measure</button>
            <button type="button" role="tab" className="w-[25px] bg-white">FFT</button>
            <button type="button" role="tab" className="w-[37px] bg-white">R-theta</button>
            <button type="button" role="tab" aria-selected="true" className="w-[38px] bg-[#d91f3d] text-[#ffc4ce]">Nyquist</button>
            <button type="button" role="tab" className="w-[29px] bg-white">Bode</button>
          </div>
          <div className="flex h-[10px] w-[27px] items-center justify-around border border-[#d4d4d4]">
            <button type="button" aria-label="Cursor" className="size-[6px]">
              <svg viewBox="0 0 12 12"><path d="M6 3V11M2 6H11" stroke="#333" strokeWidth="1.500" /><path d="M0 2L4 0V5Z" fill="#55b430" /></svg>
            </button>
            <button type="button" aria-label="Zoom" className="size-[6px]">
              <svg viewBox="0 0 12 12"><path d="M1 1L5 5M1 9H5V5M8 1H11V5H8V10H12" fill="none" stroke="#333" strokeWidth="1.500" /></svg>
            </button>
            <button type="button" aria-label="Pan" className="size-[6px]">
              <svg viewBox="0 0 12 12"><path d="M2 6L5 11H9L11 5M4 7V2M6 6V1M8 6V2" fill="none" stroke="#333" strokeWidth="1.300" /></svg>
            </button>
          </div>
          <div className="pt-[5px] pr-[14px] pl-[1px]">
            <NyquistPlot />
          </div>
        </div>
      </div>
      <AnalyzerTaskbar />
    </article>
  );
}

/* ---------- watermark ---------- */

function Watermark() {
  return (
    <>
      <div className="absolute top-[556px] right-[36px] flex items-center gap-[5px]">
        <svg viewBox="0 0 42 34" className="h-[34px] w-[42px]" aria-hidden="true">
          <g fill="#fff" stroke="#a8a8a8" strokeWidth=".6">
            <path d="M15 2C7 2 2 7 2 13.500C2 17 4 20 7 22L5.500 27L11 24C14 25 18 25 21 24C27 22 29 18 29 13C28 6 22 2 15 2Z" />
            <path d="M28 12C21 12 16 16.500 16 22C16 28 21 32 28 32C30 32 32 31.500 33 31L37.500 33.500L36.500 29.500C39 28 40.500 25 40.500 22C40.500 16.500 35 12 28 12Z" />
          </g>
          <g fill="#fff" stroke="#777" strokeWidth=".8">
            <circle cx="10.500" cy="9.500" r="1.600" />
            <circle cx="21" cy="9.500" r="1.600" />
            <circle cx="24" cy="18.500" r="1.200" />
            <circle cx="32.500" cy="18.500" r="1.200" />
          </g>
        </svg>
        <span className="font-['Noto_Sans',sans-serif] text-[26px] leading-[28px] font-light text-white [text-shadow:1px_1px_1px_#555]">FEV CN</span>
      </div>
      <div className="absolute top-[583px] right-[115px] font-['Liberation_Mono',monospace] text-[15px] leading-[17px] font-bold text-black">ybx8.cn</div>
    </>
  );
}

export default function App() {
  return (
    <main className="relative min-h-screen overflow-hidden bg-black font-[Roboto,'Noto_Sans',sans-serif]">
      <FixedFrequencyWindow />
      <FrequencySweepWindow />
      <AnalyzerWindow />
      <Watermark />
    </main>
  );
}
